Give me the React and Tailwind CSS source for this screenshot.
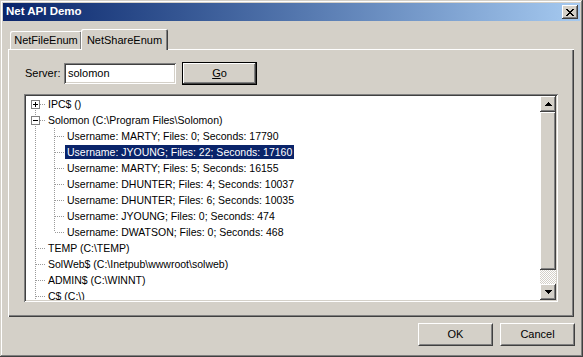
import React from "react";

const raised =
  "shadow-[inset_-1px_-1px_#404040,inset_1px_1px_#FFFFFF,inset_-2px_-2px_#808080,inset_2px_2px_#D4D0C8]";
const sunken =
  "shadow-[inset_1px_1px_#808080,inset_-1px_-1px_#FFFFFF,inset_2px_2px_#404040,inset_-2px_-2px_#D4D0C8]";

const rows = [
  { level: 0, text: "IPC$ ()", box: "plus", first: true },
  { level: 0, text: "Solomon (C:\\Program Files\\Solomon)", box: "minus" },
  { level: 1, text: "Username: MARTY; Files: 0; Seconds: 17790" },
  { level: 1, text: "Username: JYOUNG; Files: 22; Seconds: 17160", selected: true },
  { level: 1, text: "Username: MARTY; Files: 5; Seconds: 16155" },
  { level: 1, text: "Username: DHUNTER; Files: 4; Seconds: 10037" },
  { level: 1, text: "Username: DHUNTER; Files: 6; Seconds: 10035" },
  { level: 1, text: "Username: JYOUNG; Files: 0; Seconds: 474" },
  { level: 1, text: "Username: DWATSON; Files: 0; Seconds: 468", last: true },
  { level: 0, text: "TEMP (C:\\TEMP)" },
  { level: 0, text: "SolWeb$ (C:\\Inetpub\\wwwroot\\solweb)" },
  { level: 0, text: "ADMIN$ (C:\\WINNT)" },
  { level: 0, text: "C$ (C:\\)" },
];

const dot = { stroke: "#9a9a9a", strokeWidth: 1, strokeDasharray: "1 1", shapeRendering: "crispEdges" };

// one 19x16 cell of tree connector lines
const Cell = ({ vTop = true, vBottom = true, stub = false, box = null }) => (
  <svg width="19" height="16" className="shrink-0">
    {vTop && <line x1="9.5" y1="0" x2="9.5" y2="8" {...dot} />}
    {vBottom && <line x1="9.5" y1="8" x2="9.5" y2="16" {...dot} />}
    {stub && <line x1="10" y1="8.5" x2="19" y2="8.5" {...dot} />}
    {box && (
      <g shapeRendering="crispEdges">
        <rect x="5.5" y="4.5" width="8" height="8" fill="#fff" stroke="#808080" />
        <line x1="7" y1="8.5" x2="12" y2="8.5" stroke="#000" />
        {box === "plus" && <line x1="9.5" y1="6" x2="9.5" y2="11" stroke="#000" />}
      </g>
    )}
  </svg>
);

const TreeRow = ({ row }) => (
  <div className="flex h-[16px] items-center whitespace-nowrap">
    {row.level === 0 ? (
      <Cell vTop={!row.first} stub box={row.box} />
    ) : (
      <>
        <Cell />
        <Cell vBottom={!row.last} stub />
      </>
    )}
    <span
      className={
        "ml-[1px] px-[2px] leading-[14px] h-[14px] " +
        (row.selected ? "bg-[#0A246A] text-white" : "")
      }
    >
      {row.text}
    </span>
  </div>
);

const Arrow = ({ up }) => (
  <svg width="7" height="4" shapeRendering="crispEdges">
    <polygon points={up ? "3.5,0 7,4 0,4" : "0,0 7,0 3.5,4"} fill="#000" />
  </svg>
);

const DlgButton = ({ children }) => (
  <div className="w-[75px] h-[23px] border border-t-white border-l-white border-r-[#404040] border-b-[#404040] bg-[#D4D0C8]">
    <div className="h-full flex items-center justify-center border border-t-[#D4D0C8] border-l-[#D4D0C8] border-r-[#808080] border-b-[#808080]">
      {children}
    </div>
  </div>
);

export default function App() {
  return (
    <div
      className={
        "w-[583px] h-[357px] bg-[#D4D0C8] p-[3px] flex flex-col text-[11px] text-black font-['Liberation_Sans',Arial,sans-serif] " +
        "shadow-[inset_-1px_-1px_#404040,inset_1px_1px_#D4D0C8,inset_-2px_-2px_#808080,inset_2px_2px_#FFFFFF]"
      }
    >
      {/* title bar */}
      <div className="h-[18px] flex items-center justify-between pl-[3px] pr-[2px] bg-gradient-to-r from-[#0A246A] to-[#A6CAF0]">
        <span className="font-bold text-white text-[11.5px]">Net API Demo</span>
        <div className={"w-[16px] h-[14px] bg-[#D4D0C8] flex items-center justify-center " + raised}>
          <svg width="8" height="7" shapeRendering="crispEdges">
            <path d="M0 0h2v1h1v1h2v-1h1v-1h2v1h-1v1h-1v1h-1v1h1v1h1v1h1v1h-2v-1h-1v-1h-2v1h-1v1h-2v-1h1v-1h1v-1h1v-1h-1v-1h-1v-1h-1z" fill="#000" />
          </svg>
        </div>
      </div>

      {/* tabs */}
      <div className="mt-[8px] ml-[5px] h-[20px] flex items-end">
        <div className="ml-[2px] w-[72px] h-[18px] flex items-center justify-center rounded-t-[2px] shadow-[inset_1px_1px_#FFFFFF,inset_-1px_0_#404040,inset_-2px_0_#808080]">
          NetFileEnum
        </div>
        <div className="relative z-10 -ml-[1px] -mb-[1px] w-[87px] h-[21px] bg-[#D4D0C8] flex items-start justify-center pt-[3px] rounded-t-[2px] shadow-[inset_1px_1px_#FFFFFF,inset_-1px_0_#404040,inset_-2px_0_#808080]">
          NetShareEnum
        </div>
      </div>

      {/* tab panel */}
      <div className="ml-[5px] w-[566px] h-[268px] pt-[13px] pl-[16px] flex flex-col shadow-[inset_1px_1px_#FFFFFF,inset_-1px_-1px_#404040,inset_-2px_-2px_#808080]">
        <div className="flex items-center h-[23px]">
          <span className="ml-[1px] w-[39px]">Server:</span>
          <div className={"w-[112px] h-[21px] bg-white flex items-center pl-[4px] " + sunken}>solomon</div>
          <div className="ml-[6px] w-[75px] h-[23px] border border-black bg-[#D4D0C8] shadow-[inset_-1px_-1px_#404040,inset_1px_1px_#FFFFFF,inset_-2px_-2px_#808080] flex items-center justify-center">
            <span>
              <span className="underline">G</span>o
            </span>
          </div>
        </div>

        {/* tree view */}
        <div className={"mt-[9px] w-[534px] h-[208px] bg-white p-[2px] flex text-[10.5px] " + sunken}>
          <div className="flex-1 overflow-hidden">
            {rows.map((r, i) => (
              <TreeRow key={i} row={r} />
            ))}
          </div>
          <div className="w-[16px] flex flex-col">
            <div className={"h-[16px] bg-[#D4D0C8] flex items-center justify-center " + raised}>
              <Arrow up />
            </div>
            <div className={"h-[158px] bg-[#D4D0C8] " + raised} />
            <div className="flex-1 bg-[repeating-conic-gradient(#FFFFFF_0_25%,#D4D0C8_0_50%)] bg-[length:2px_2px]" />
            <div className={"h-[16px] bg-[#D4D0C8] flex items-center justify-center " + raised}>
              <Arrow />
            </div>
          </div>
        </div>
      </div>

      {/* bottom buttons */}
      <div className="mt-[6px] flex justify-end gap-[7px] pr-[5px]">
        <DlgButton>OK</DlgButton>
        <DlgButton>Cancel</DlgButton>
      </div>
    </div>
  );
}
